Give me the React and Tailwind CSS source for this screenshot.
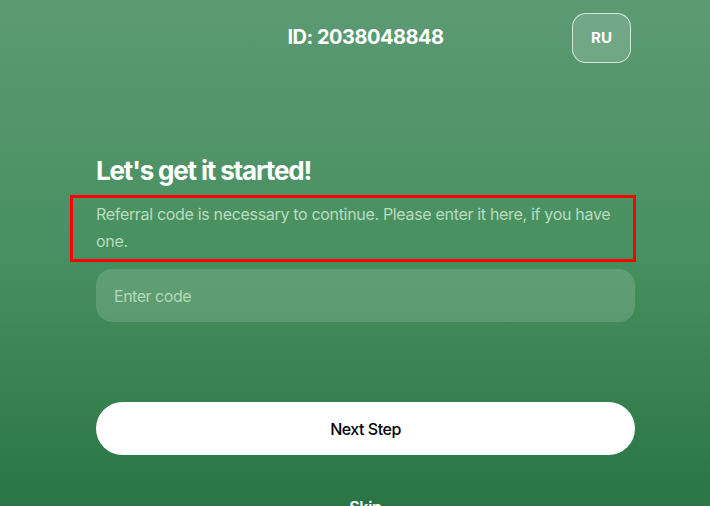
export default function App() {
  return (
    <div
      className="w-[710px] h-[506px] overflow-hidden bg-gradient-to-b from-[#5c9a74] via-[#47905f] to-[#297544] text-white"
      style={{ fontFamily: "Inter, 'Noto Sans', sans-serif" }}
    >
      <div className="ml-[96px] w-[539px] flex flex-col">
        {/* header */}
        <div className="relative h-[75px] flex items-center justify-center">
          <span className="text-[20px] font-bold tracking-[-0.025em] -mt-[1px]">ID: 2038048848</span>
          <button
            type="button"
            className="absolute right-[4px] top-[13px] w-[59px] h-[50px] rounded-[14px] border border-white/70 bg-white/15 text-[15px] font-bold"
          >
            RU
          </button>
        </div>

        <h1 className="mt-[80px] text-[26px] leading-[32px] font-bold tracking-[-0.045em]">Let's get it started!</h1>

        <div className="relative mt-[14px]">
          <p className="text-[16px] leading-[27px] tracking-[-0.02em] text-[#b9dcbf]">
            Referral code is necessary to continue. Please enter it here, if you have one.
          </p>
          <div className="absolute -left-[26px] -top-[6px] w-[566px] h-[67px] border-[3px] border-[#ff0000]" />
        </div>

        <input
          type="text"
          placeholder="Enter code"
          className="mt-[14px] h-[53px] w-full rounded-[16px] bg-white/15 px-[18px] text-[16px] tracking-[-0.03em] text-white placeholder:text-[#b5d9bb] outline-none"
        />

        <button
          type="button"
          className="mt-[80px] h-[53px] w-full rounded-full bg-white text-black text-[16px] font-medium tracking-[-0.03em]"
        >
          Next Step
        </button>

        <span className="mt-[40px] text-center text-[16px] font-semibold tracking-[-0.02em]">Skip</span>
      </div>
    </div>
  );
}
